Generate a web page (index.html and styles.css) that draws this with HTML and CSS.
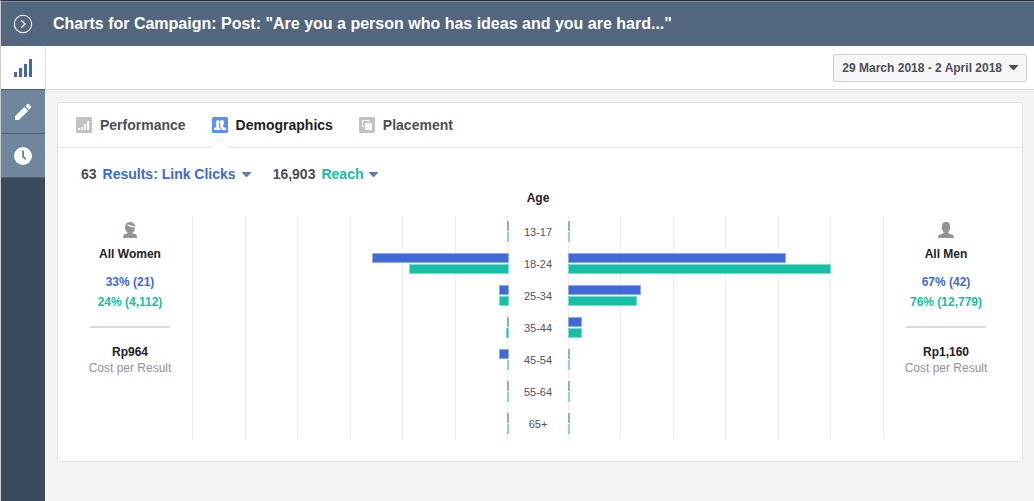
FILE: index.html
```html
<!DOCTYPE html>
<html lang="en">
<head>
<meta charset="utf-8">
<meta name="viewport" content="width=device-width, initial-scale=1">
<title>Charts for Campaign</title>
<link rel="stylesheet" href="styles.css">
</head>
<body>
<div class="page">
  <header class="header">
    <button class="header-close" type="button" aria-label="Close panel">
      <svg width="20" height="20" viewBox="0 0 20 20" fill="none" stroke="#f4f6f8"><circle cx="10" cy="10" r="8.7" stroke-width="1.1"/><path d="M8.3 6.3 12 10l-3.7 3.7" stroke-width="1.3"/></svg>
    </button>
    <h1 class="header-title">Charts for Campaign: Post: "Are you a person who has ideas and you are hard..."</h1>
  </header>
  <div class="workspace">
    <nav class="rail" aria-label="Views">
      <button class="rail-item rail-item-active" type="button" aria-label="Charts">
        <svg width="18" height="18" viewBox="0 0 18 18" fill="#4267b2"><path d="M0 13h3v5H0zM5 9h3v9H5zM10 5h3v13h-3zM15 0h3v18h-3z"/></svg>
      </button>
      <button class="rail-item" type="button" aria-label="Edit">
        <svg width="18" height="18" viewBox="0 0 18 18" fill="#fff"><path d="M1 13.2 10.4 4l3.8 3.700-9.300 9.200H1zM11.300 3.100l1.800-1.800q1-.9 2 0l1.600 1.700q.9.9 0 1.800l-1.700 1.900z"/></svg>
      </button>
      <button class="rail-item" type="button" aria-label="History">
        <svg width="18" height="18" viewBox="0 0 18 18"><circle cx="9" cy="9" r="9" fill="#fff"/><path d="M9 3.500v5.800l2.800 3" fill="none" stroke="#6f869c" stroke-width="1.900"/></svg>
      </button>
    </nav>
    <main class="main">
      <div class="toolbar">
        <button class="date-button" type="button" aria-haspopup="true">29 March 2018 - 2 April 2018
          <svg width="9" height="5" viewBox="0 0 9 5" fill="#4b4f56"><path d="M0 0h9v.8L5 5H4L0 .8z"/></svg>
        </button>
      </div>
      <section class="card">
        <div class="tabs" role="tablist">
          <button class="tab" type="button" role="tab" aria-selected="false">
            <svg width="16" height="16" viewBox="0 0 16 16"><rect width="16" height="16" rx="1.500" fill="#bec3c9"/><path d="M2 11h2v2H2zM5 10h2v3H5zM8 7h2v6H8zM11 4h2v9h-2z" fill="#fff"/></svg>
            Performance
          </button>
          <button class="tab tab-active" type="button" role="tab" aria-selected="true">
            <svg width="16" height="16" viewBox="0 0 16 16"><rect width="16" height="16" rx="1.500" fill="#5890ff"/><path d="M2 13v-1.800l2.300-1.500V8.200Q3.600 7.500 3.900 5q.3-2 2-2Q7.300 3 7.400 4.500q.1 2-.4 3.500v2l1.500 1.500V13zM8 6q-.2-3 1.900-3 2.300 0 2 3-.2 1.700-.8 2.200v1.500l2.900 1.500V13H9.500v-2L8 9.800z" fill="#fff"/></svg>
            Demographics
            <svg class="tab-notch" width="20" height="10" viewBox="0 0 20 10"><path d="M0 9.500h1L10 .7l9 8.800h1V10H0z" fill="#fff"/><path d="M0 9.500h1L10 .7l9 8.800h1" fill="none" stroke="#e3e4e6"/></svg>
          </button>
          <button class="tab" type="button" role="tab" aria-selected="false">
            <svg width="16" height="16" viewBox="0 0 16 16"><rect width="16" height="16" rx="1.500" fill="#bec3c9"/><path d="M3.500 10V3.500H10V5M3.500 9.500H5" fill="none" stroke="#fff"/><rect x="6" y="6" width="7" height="7" rx=".7" fill="#fff"/></svg>
            Placement
          </button>
        </div>
        <div class="metrics">
          <div class="metric">63
            <button class="metric-picker metric-results" type="button" aria-haspopup="true">Results: Link Clicks
              <svg width="9" height="5" viewBox="0 0 9 5" fill="#627aad"><path d="M0 0h9v.8L5 5H4L0 .8z"/></svg>
            </button>
          </div>
          <div class="metric">16,903
            <button class="metric-picker metric-reach" type="button" aria-haspopup="true">Reach
              <svg width="9" height="5" viewBox="0 0 9 5" fill="#627aad"><path d="M0 0h9v.8L5 5H4L0 .8z"/></svg>
            </button>
          </div>
        </div>
        <div class="chart">
          <h2 class="axis-title">Age</h2>
          <div class="summary">
            <svg width="16" height="16" viewBox="0 0 16 16" fill="#90949c"><path d="M3 6Q2.800 0 8 0t5 5.500q0 3.500-2.500 5v.8l3.500 1q1 .7 1 3.700H1q0-3 1-3.700l3.500-1v-.8Q3.200 9 3 6z"/><path d="M5.500 2.800Q8.500 4.300 12.600 5.200" fill="none" stroke="#fff" stroke-width="1.100"/></svg>
            <h3 class="summary-name">All Women</h3>
            <p class="summary-results">33% (21)</p>
            <p class="summary-reach">24% (4,112)</p>
            <hr class="summary-rule">
            <p class="summary-cost">Rp964</p>
            <p class="summary-note">Cost per Result</p>
          </div>
          <div class="plot plot-women">
            <div class="gridlines"><i></i><i></i><i></i><i></i><i></i><i></i><i></i></div>
            <div class="rows">
              <div class="pair"><b class="bar tiny"></b><b class="bar reach tiny"></b></div>
              <div class="pair"><b class="bar" style="width:43%"></b><b class="bar reach" style="width:31.6%"></b></div>
              <div class="pair"><b class="bar" style="width:3%"></b><b class="bar reach" style="width:3%"></b></div>
              <div class="pair"><b class="bar tiny"></b><b class="bar reach" style="width:0.9%"></b></div>
              <div class="pair"><b class="bar" style="width:3%"></b><b class="bar reach tiny"></b></div>
              <div class="pair"><b class="bar tiny"></b><b class="bar reach tiny"></b></div>
              <div class="pair"><b class="bar tiny"></b><b class="bar reach tiny"></b></div>
            </div>
          </div>
          <ul class="ages"><li>13-17</li><li>18-24</li><li>25-34</li><li>35-44</li><li>45-54</li><li>55-64</li><li>65+</li></ul>
          <div class="plot">
            <div class="gridlines"><i></i><i></i><i></i><i></i><i></i><i></i><i></i></div>
            <div class="rows">
              <div class="pair"><b class="bar tiny"></b><b class="bar reach tiny"></b></div>
              <div class="pair"><b class="bar" style="width:69%"></b><b class="bar reach" style="width:83.4%"></b></div>
              <div class="pair"><b class="bar" style="width:23.1%"></b><b class="bar reach" style="width:21.9%"></b></div>
              <div class="pair"><b class="bar" style="width:4.5%"></b><b class="bar reach" style="width:4.5%"></b></div>
              <div class="pair"><b class="bar tiny"></b><b class="bar reach tiny"></b></div>
              <div class="pair"><b class="bar tiny"></b><b class="bar reach tiny"></b></div>
              <div class="pair"><b class="bar tiny"></b><b class="bar reach tiny"></b></div>
            </div>
          </div>
          <div class="summary">
            <svg width="16" height="16" viewBox="0 0 16 16" fill="#90949c"><path d="M8 0q4.500 0 4 5 .5.300.2 1.800-.2 1.200-.9 1.400Q11 9.800 10.300 10.500v.8l4.400 1.400Q16 13.300 16 16H0q0-2.700 1.300-3.300l4.400-1.400v-.8Q5 9.800 4.700 8.200 4 8 3.800 6.800 3.500 5.300 4 5 3.500 0 8 0z"/></svg>
            <h3 class="summary-name">All Men</h3>
            <p class="summary-results">67% (42)</p>
            <p class="summary-reach">76% (12,779)</p>
            <hr class="summary-rule">
            <p class="summary-cost">Rp1,160</p>
            <p class="summary-note">Cost per Result</p>
          </div>
        </div>
      </section>
    </main>
  </div>
</div>
</body>
</html>
```
FILE: styles.css
```css
* { box-sizing: border-box; }
body, h1, h2, h3, p, ul { margin: 0; padding: 0; }
body { font: 12px/16px "Liberation Sans", Arial, sans-serif; color: #1d2129; }
button { margin: 0; padding: 0; border: 0; background: none; font: inherit; color: inherit; cursor: pointer; }
svg { display: block; flex: none; }

.page { display: flex; flex-direction: column; min-height: 100vh; border-left: 1px solid #c9cdcc; border-top: 1px solid #2b2f40; }
.header { display: flex; align-items: center; height: 45px; background: #52677e; border-top: 1px solid #858da0; color: #fff; }
.header-close { display: flex; justify-content: center; width: 44px; }
.header-title { padding-left: 8px; font-size: 16px; line-height: 20px; white-space: nowrap; }

.workspace { display: flex; flex: 1; }
.rail { display: flex; flex-direction: column; width: 44px; flex: none; background: #3b4a5a; }
.rail-item { display: flex; align-items: center; justify-content: center; height: 44px; background: #6f869c; border-bottom: 1px solid #4a6079; }
.rail-item-active { background: #fff; }

.main { flex: 1; min-width: 0; background: #f2f4f4; }
.toolbar { display: flex; align-items: center; justify-content: flex-end; height: 44px; padding-right: 7px; background: #fff; border-bottom: 1px solid #dcdee0; border-left: 1px solid #dcdee0; }
.date-button { display: flex; align-items: center; gap: 7px; height: 28px; padding: 0 8px; background: #f6f7f9; border: 1px solid #ccced3; border-radius: 2px; font-weight: bold; color: #4b4f56; }

.card { margin: 12px 11px 39px 12px; padding-bottom: 21px; background: #fff; border: 1px solid #dfe1e2; border-radius: 3px; }
.tabs { display: flex; gap: 26px; height: 45px; padding-left: 18px; border-bottom: 1px solid #e3e4e6; }
.tab { position: relative; display: flex; align-items: center; gap: 8px; font-size: 14px; font-weight: bold; color: #4b4f56; }
.tab-active { color: #1d2129; }
.tab-notch { position: absolute; left: -2px; bottom: -1px; }

.metrics { display: flex; gap: 22px; padding: 18px 23px 8px; font-size: 14px; font-weight: bold; color: #4b4f56; }
.metric { display: flex; gap: 6px; }
.metric-picker { display: flex; align-items: center; gap: 6px; }
.metric-results { color: #3e69d7; }
.metric-reach { color: #17bda5; }

.chart { display: grid; grid-template-columns: 124px 1fr 59px 1fr 124px; row-gap: 10px; padding: 0 14px 0 10px; }
.axis-title { grid-column: 1 / -1; font-size: 12px; line-height: 16px; text-align: center; }
.summary { display: flex; flex-direction: column; align-items: center; padding-top: 6px; font-weight: bold; }
.summary-name { margin: 8px 0 12px; font-size: 12px; }
.summary-results { margin-bottom: 4px; color: #3e69d7; }
.summary-reach { color: #17bda5; }
.summary-rule { width: 80px; height: 2px; margin: 16px 0; border: 0; background: #dadbdd; }
.summary-note { font-weight: normal; color: #90949c; }

.plot { display: grid; }
.gridlines, .rows { grid-area: 1 / 1; }
.gridlines { display: flex; justify-content: space-between; height: 223px; }
.gridlines i { width: 1px; background: #ececee; }
.pair { display: flex; flex-direction: column; gap: 1px; height: 32px; padding-top: 5px; }
.plot-women .pair { align-items: flex-end; }
.bar { height: 10px; background: #3f6ad8; border: 1px solid #90a9e7; }
.reach { background: #16bfa6; border-color: #7ddccd; }
.tiny { width: 2px; }
.ages { list-style: none; text-align: center; font-size: 11px; line-height: 32px; color: #4b5566; }
```
